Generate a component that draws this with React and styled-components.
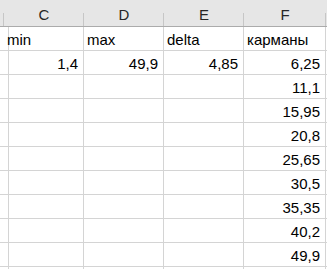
import React from 'react'
import styled, { createGlobalStyle } from 'styled-components'

const Global = createGlobalStyle`
  html, body { margin: 0; padding: 0; background: #fff; }
  body { font-family: "Liberation Sans", Arial, sans-serif; }
`

const columns = ['C', 'D', 'E', 'F']

const rows = [
  [{ v: 'min', t: 1 }, { v: 'max', t: 1 }, { v: 'delta', t: 1 }, { v: 'карманы', t: 1 }],
  ['1,4', '49,9', '4,85', '6,25'],
  ['', '', '', '11,1'],
  ['', '', '', '15,95'],
  ['', '', '', '20,8'],
  ['', '', '', '25,65'],
  ['', '', '', '30,5'],
  ['', '', '', '35,35'],
  ['', '', '', '40,2'],
  ['', '', '', '49,9'],
  ['', '', '', ''],
]

const Sheet = styled.div`
  display: grid;
  grid-template-columns: 4px 80px 80px 80px 82px 1px;
  grid-auto-rows: 24px;
  grid-template-rows: 27px;
  width: 327px;
  height: 269px;
  overflow: hidden;
`

const HeadCell = styled.div`
  position: relative;
  background: #e6e6e6;
  border-bottom: 1px solid #ababab;
  color: #262626;
  font-size: 15px;
  display: flex;
  align-items: center;
  justify-content: center;
  padding-top: 2px;
  box-sizing: border-box;
  &::after {
    content: '';
    position: absolute;
    right: 0;
    top: 13px;
    bottom: 0;
    width: 1px;
    background: ${p => (p.$edge ? 'transparent' : '#c6c6c6')};
  }
`

const Cell = styled.div`
  border-right: 1px solid ${p => (p.$edge ? 'transparent' : '#d4d4d4')};
  border-bottom: 1px solid #d4d4d4;
  box-sizing: border-box;
  font-size: 15px;
  color: #000;
  display: flex;
  align-items: center;
  justify-content: ${p => (p.$text ? 'flex-start' : 'flex-end')};
  padding: 1px 5px 0 3px;
  white-space: nowrap;
  overflow: hidden;
`

export default function App() {
  return (
    <>
      <Global />
      <Sheet>
        <HeadCell />
        {columns.map(c => (
          <HeadCell key={c}>{c}</HeadCell>
        ))}
        <HeadCell $edge />
        {rows.map((r, i) => (
          <React.Fragment key={i}>
            <Cell />
            {r.map((c, j) => {
              const text = typeof c === 'object'
              return (
                <Cell key={j} $text={text}>
                  {text ? c.v : c}
                </Cell>
              )
            })}
            <Cell $edge />
          </React.Fragment>
        ))}
      </Sheet>
    </>
  )
}
